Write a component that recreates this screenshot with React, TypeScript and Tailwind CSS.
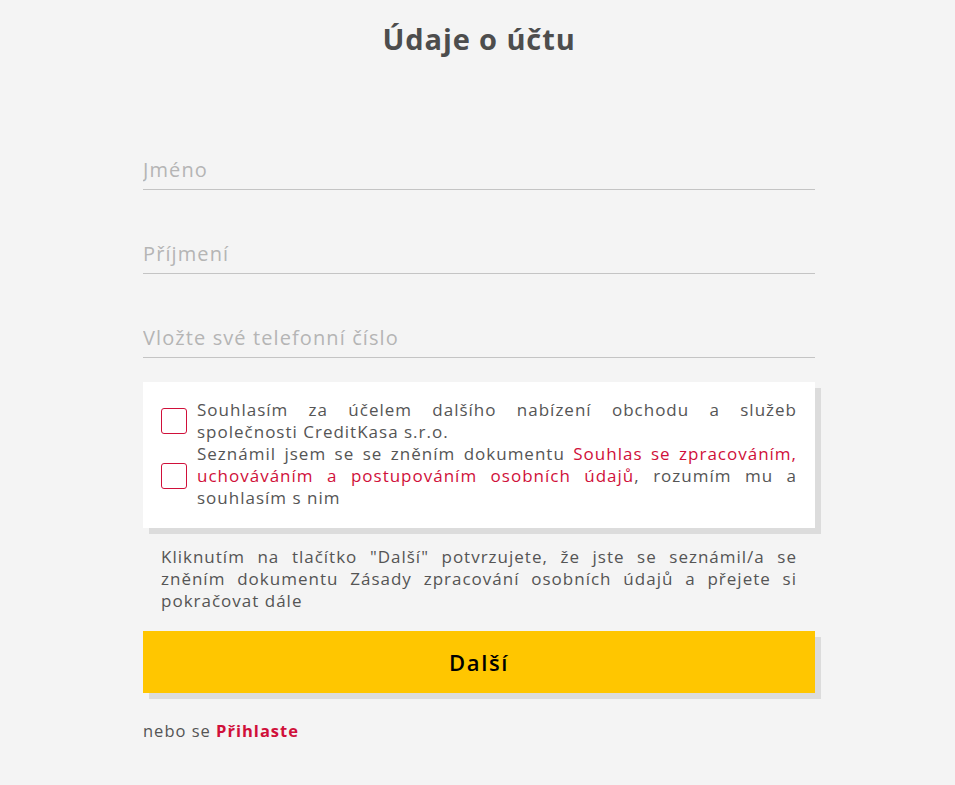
import React from "react";

const font = { fontFamily: '"Open Sans", "Liberation Sans", sans-serif' };

function Field({ placeholder }: { placeholder: string }) {
  return (
    <div className="border-b border-[#c4c4c4] pb-[5px]">
      <input
        placeholder={placeholder}
        className="w-full bg-transparent outline-none text-[20px] leading-[28px] text-[#555] placeholder:text-[#b5b5b5] tracking-[1.1px]"
      />
    </div>
  );
}

function Box() {
  return <span className="shrink-0 block w-[26px] h-[26px] border border-[#d0103a] rounded-[3px] bg-white" />;
}

export default function App() {
  return (
    <div className="min-h-[785px] w-full bg-[#f4f4f4] text-[#555]" style={font}>
      <div className="w-[672px] ml-[143px] pt-[20px]">
        <h1 className="text-center text-[29px] leading-[38px] font-bold text-[#4d4d4d] tracking-[0.9px]">Údaje o účtu</h1>
        <div className="mt-[98px] flex flex-col gap-[50px]">
          <Field placeholder="Jméno" />
          <Field placeholder="Příjmení" />
          <Field placeholder="Vložte své telefonní číslo" />
        </div>
        <div className="mt-[24px] bg-white shadow-[6px_6px_0_#dcdcdc] pl-[18px] pr-[18px] pt-[17px] pb-[19px] text-[17px] leading-[22px] tracking-[1px] text-[#555] text-justify">
          <div className="flex items-center gap-[10px]">
            <Box />
            <p>Souhlasím za účelem dalšího nabízení obchodu a služeb společnosti CreditKasa s.r.o.</p>
          </div>
          <div className="flex items-center gap-[10px]">
            <Box />
            <p>
              Seznámil jsem se se zněním dokumentu <span className="text-[#d0103a]">Souhlas se zpracováním, uchováváním a postupováním osobních údajů</span>, rozumím mu a souhlasím s nim
            </p>
          </div>
        </div>
        <p className="mt-[18px] px-[18px] text-[17px] leading-[22px] tracking-[1px] text-[#555] text-justify">
          Kliknutím na tlačítko "Další" potvrzujete, že jste se seznámil/a se zněním dokumentu Zásady zpracování osobních údajů a přejete si pokračovat dále
        </p>
        <button className="mt-[19px] w-full h-[62px] bg-[#ffc600] shadow-[6px_6px_0_#dcdcdc] text-[22px] font-[550] tracking-[1.6px] text-black">
          Další
        </button>
        <p className="mt-[27px] text-[16.5px] leading-[22px] tracking-[1px] text-[#555]">
          nebo se <span className="font-bold text-[#d0103a]">Přihlaste</span>
        </p>
      </div>
    </div>
  );
}
